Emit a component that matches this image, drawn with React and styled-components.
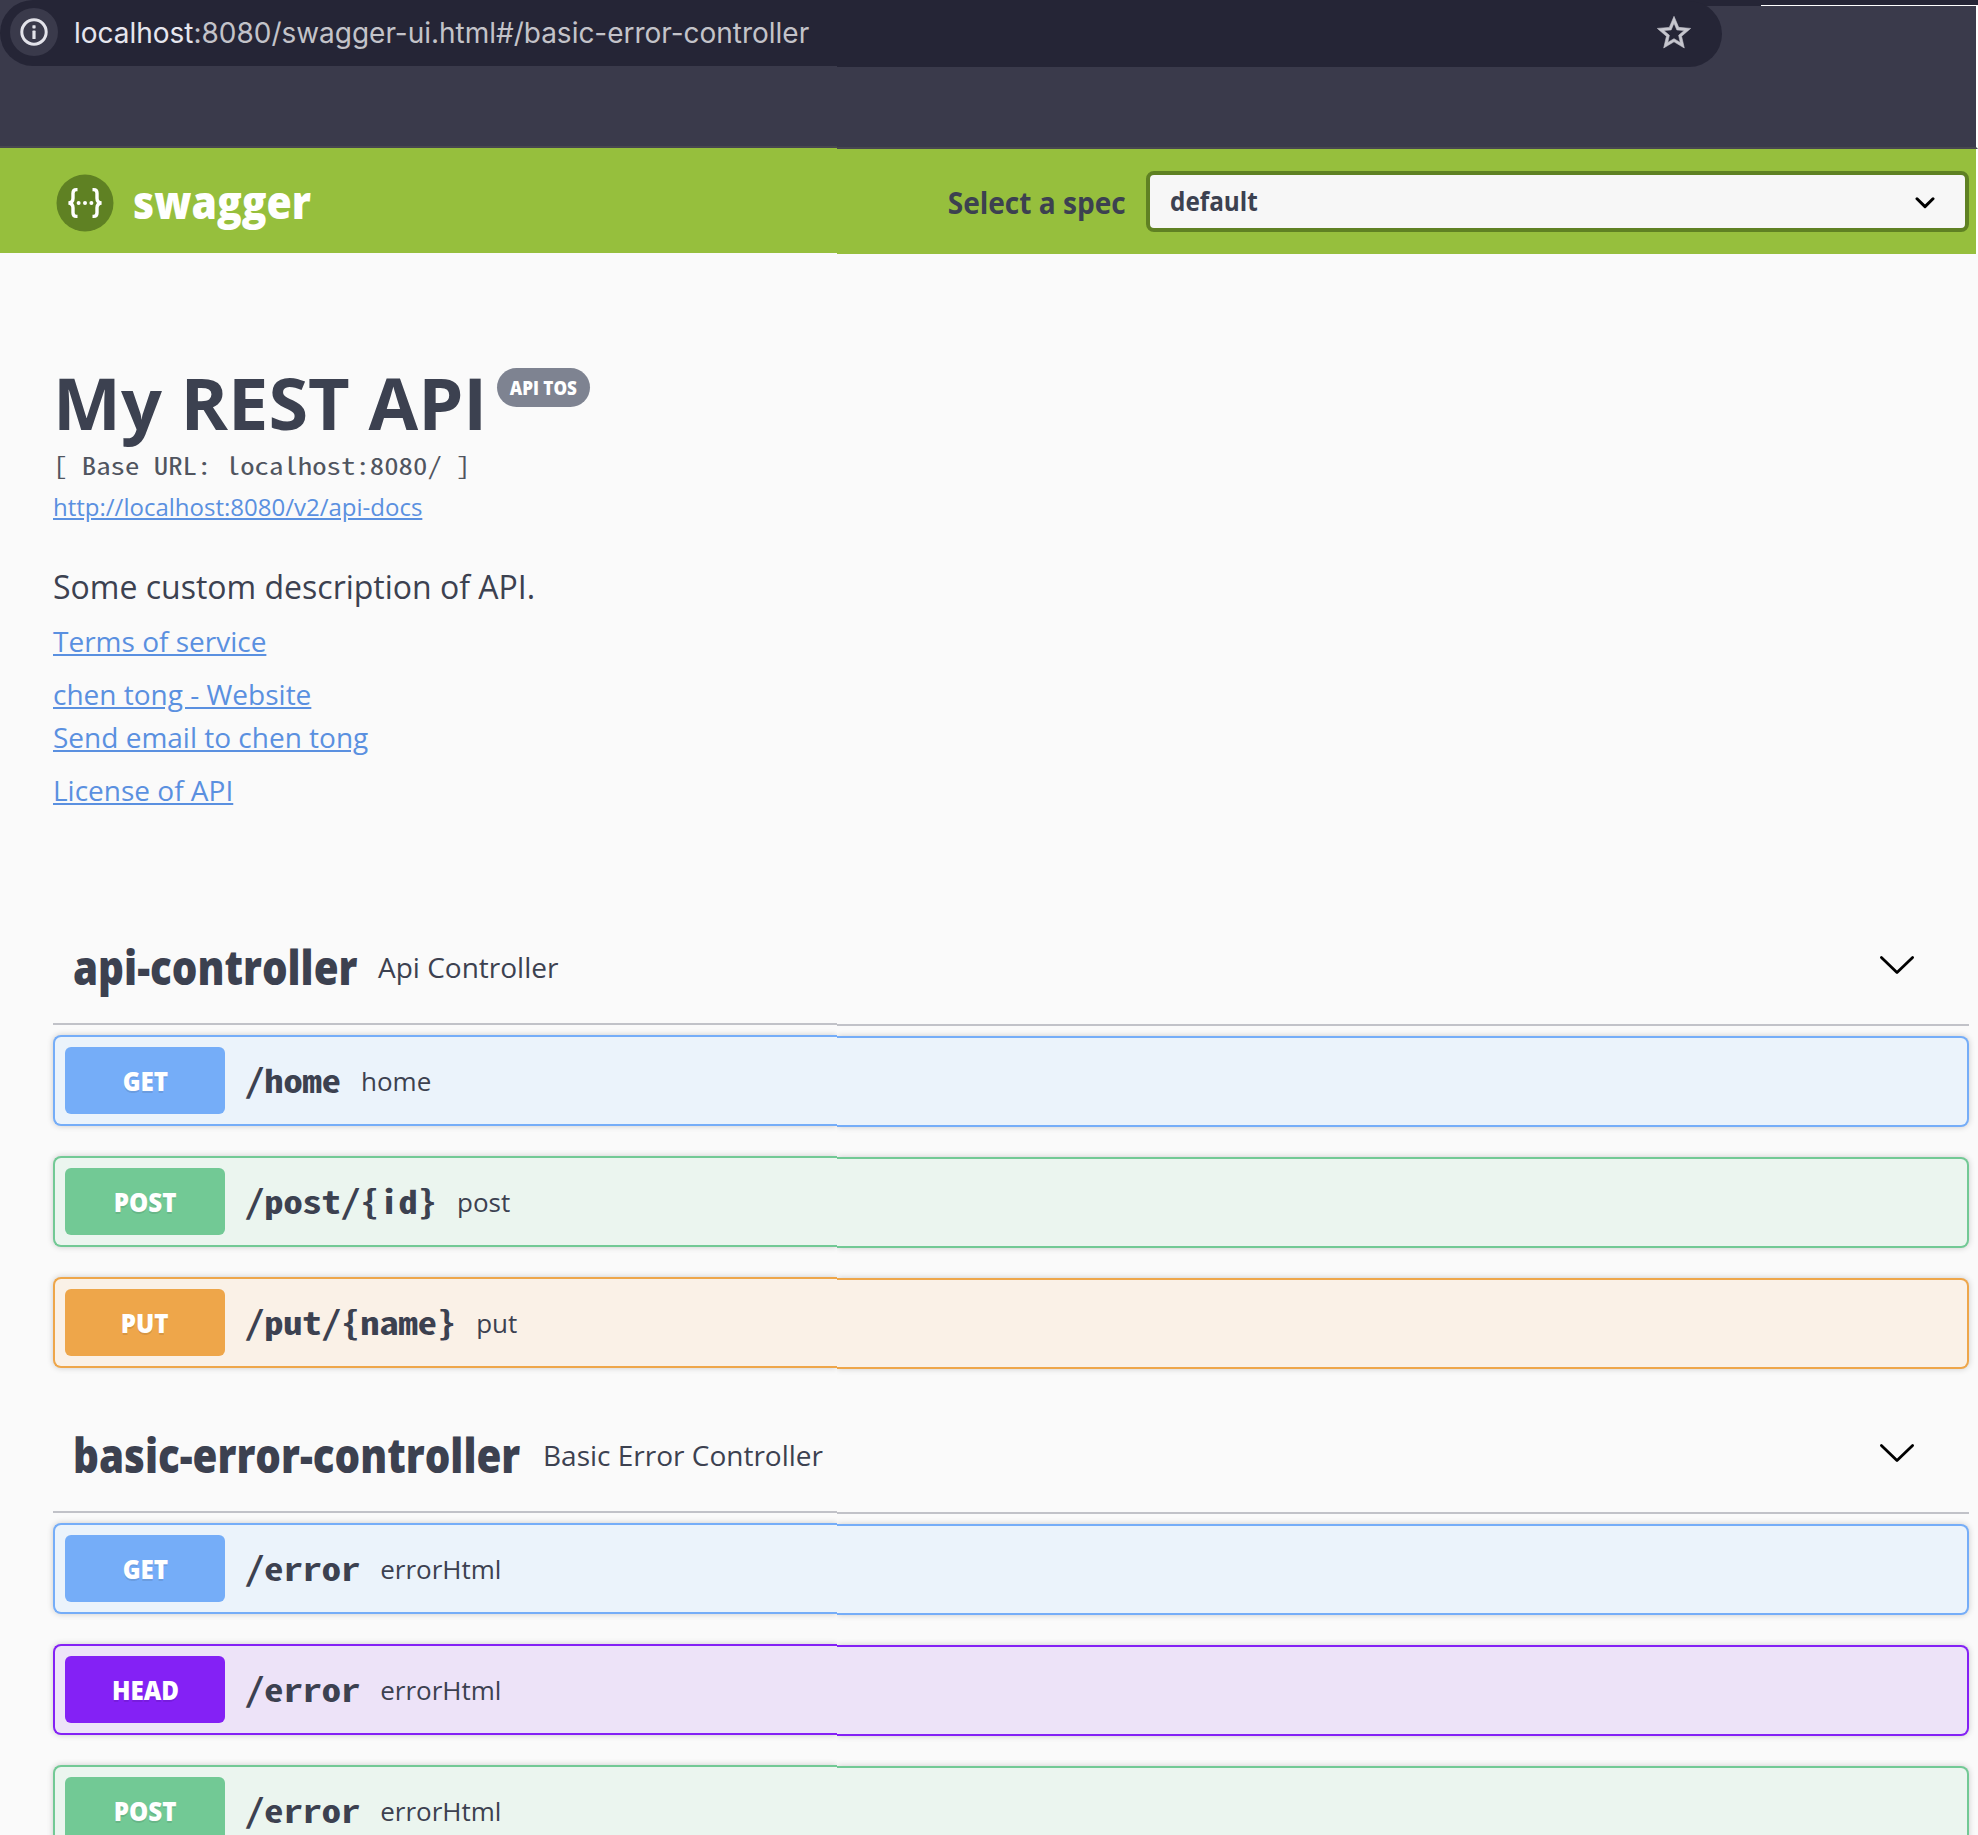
import React from "react";
import styled, { createGlobalStyle } from "styled-components";

const ink = "#3c4150";
const sans = '"Open Sans", "Noto Sans", sans-serif';
const mono = '"Noto Sans Mono CJK SC", "Liberation Mono", monospace';

const METHODS = {
  GET: { main: "#75adf8", tint: "#ebf3fb" },
  POST: { main: "#72c995", tint: "#ebf5ef" },
  PUT: { main: "#eea64a", tint: "#faf1e7" },
  HEAD: { main: "#8421f5", tint: "#ede3f8" },
};

const TAGS = [
  {
    name: "api-controller",
    text: "Api Controller",
    width: 285,
    operations: [
      { method: "GET", path: "/home", summary: "home" },
      { method: "POST", path: "/post/{id}", summary: "post" },
      { method: "PUT", path: "/put/{name}", summary: "put" },
    ],
  },
  {
    name: "basic-error-controller",
    text: "Basic Error Controller",
    width: 450,
    operations: [
      { method: "GET", path: "/error", summary: "errorHtml" },
      { method: "HEAD", path: "/error", summary: "errorHtml" },
      { method: "POST", path: "/error", summary: "errorHtml" },
    ],
  },
];

const GlobalStyle = createGlobalStyle`
  * { box-sizing: border-box; }
  body { margin: 0; background: #fafafa; }
`;

const Page = styled.div`
  width: 1978px;
  height: 1835px;
  overflow: hidden;
  background: #fafafa;
  color: ${ink};
  font-family: ${sans};
`;

const Split = styled.div`
  display: flex;
  align-items: flex-start;
`;

const Scaled = styled.span`
  display: inline-block;
  transform: scaleX(${(p) => p.$scale});
  transform-origin: ${(p) => p.$origin || "center"};
  white-space: nowrap;
`;

const Chrome = styled(Split)`
  height: 149px;
  margin-bottom: -1px;
  background: #3a3a4b;
`;

const ChromeLead = styled.div`
  width: 837px;
  height: 148px;
  border-bottom: 2px solid #47474f;
`;

const ChromeTail = styled.div`
  flex: 1;
  height: 149px;
  border-bottom: 2px solid #47474f;
  border-right: 2px solid #ffffff;
`;

const TopStrip = styled.div`
  display: flex;
  justify-content: flex-end;
  height: 6px;
  margin-right: -2px;
  background: #252536;
`;

const TabEdge = styled.div`
  width: 217px;
  border-bottom: 1px solid #ffffff;
`;

const AddressLead = styled.div`
  display: flex;
  align-items: center;
  height: 66px;
  padding: 0 0 2px 10px;
  border-radius: 33px 0 0 33px;
  background: #252536;
`;

const AddressTail = styled.div`
  display: flex;
  align-items: center;
  justify-content: flex-end;
  width: 885px;
  height: 66px;
  margin-top: -5px;
  padding: 0 28px 2px 0;
  border-radius: 0 33px 33px 0;
  background: #252536;
`;

const Star = styled.svg`
  width: 40px;
  height: 40px;
`;

const InfoButton = styled.div`
  display: flex;
  width: 48px;
  height: 48px;
  border-radius: 50%;
  background: #3a3a4b;
`;

const Address = styled.div`
  margin-left: 16px;
  padding-top: 1px;
  color: #c3c3c9;
  font: 28px/40px Inter, Roboto, sans-serif;
  letter-spacing: -0.02px;
  white-space: nowrap;
`;

const Host = styled.span`
  color: #e6e6ee;
`;

const BarLead = styled.div`
  display: flex;
  align-items: center;
  gap: 19px;
  width: 837px;
  height: 105px;
  padding-left: 56px;
  background: #96bf3d;
`;

const BarTail = styled.div`
  display: flex;
  align-items: center;
  justify-content: flex-end;
  gap: 20px;
  flex: 1;
  height: 105px;
  margin-top: 1px;
  padding-right: 7px;
  border-right: 2px solid #ffffff;
  background: #96bf3d;
`;

const LogoMark = styled.svg`
  width: 58px;
  height: 58px;
  margin-top: 4px;
`;

const LogoText = styled.div`
  color: #ffffff;
  font-size: 46px;
  font-weight: 800;
`;

const SpecLabel = styled.div`
  font-size: 31px;
  font-weight: 700;
`;

const SpecSelect = styled.div`
  display: flex;
  align-items: center;
  justify-content: space-between;
  width: 823px;
  height: 61px;
  padding: 0 30px 2px 20px;
  border: 4px solid #5f8123;
  border-radius: 8px;
  background: #f7f7f7;
  font-size: 27px;
  font-weight: 700;
`;

const Caret = styled.svg`
  width: 20px;
  height: 14px;
  margin-top: 4px;
`;

const Content = styled.main`
  padding: 106px 9px 0 53px;
`;

const Info = styled.section`
  display: flex;
  flex-direction: column;
  align-items: flex-start;
  height: 550px;
`;

const TitleRow = styled.div`
  display: flex;
  align-items: flex-start;
  gap: 10px;
`;

const Title = styled.h1`
  margin: 0;
  font-size: 72px;
  line-height: 84px;
  font-weight: 700;
`;

const Badge = styled.span`
  display: flex;
  align-items: center;
  justify-content: center;
  width: 93px;
  height: 39px;
  margin-top: 8px;
  border-radius: 20px;
  background: #7e8391;
  color: #ffffff;
  font-size: 19px;
  font-weight: 800;
`;

const BaseUrl = styled.pre`
  margin: 6px 0 12px;
  color: #50555f;
  font: 24px/30px ${mono};
`;

const Link = styled.a`
  margin-top: ${(p) => p.$gap}px;
  color: #5a90e0;
  font-size: ${(p) => p.$size}px;
  line-height: ${(p) => p.$line}px;
  text-decoration: underline;
`;

const Description = styled.p`
  margin: 43px 0 -2px;
  font-size: 32px;
  line-height: 44px;
`;

const TagHeader = styled.header`
  display: flex;
  align-items: center;
  height: 113px;
  padding: 0 54px 0 20px;
`;

const TagName = styled.h2`
  width: ${(p) => p.$width}px;
  margin: 0;
  padding-bottom: 1px;
  font-size: 48px;
  font-weight: 800;
  white-space: nowrap;
`;

const TagText = styled.span`
  flex: 1;
  margin-left: 20px;
  padding-top: 1px;
  font-size: 28px;
`;

const TagArrow = styled.svg`
  width: 36px;
  height: 20px;
  margin-bottom: 3px;
`;

const Rule = styled(Split)`
  height: 2px;
  margin-bottom: 10px;
`;

const RuleLead = styled.div`
  width: 784px;
  height: 2px;
  background: #c1c2c8;
`;

const RuleTail = styled.div`
  flex: 1;
  height: 2px;
  margin-top: 1px;
  background: #c1c2c8;
`;

const Operation = styled(Split)`
  height: 91px;
  margin-bottom: 30px;
`;

const OperationLead = styled.div`
  display: flex;
  align-items: center;
  width: 784px;
  height: 91px;
  padding-left: 10px;
  border: 2px solid ${(p) => p.$tone.main};
  border-right: 0;
  border-radius: 8px 0 0 8px;
  background: ${(p) => p.$tone.tint};
  box-shadow: 0 0 6px rgba(0, 0, 0, 0.19);
  clip-path: inset(-10px 0 -10px -10px);
`;

const OperationTail = styled.div`
  flex: 1;
  height: 91px;
  margin-top: 1px;
  border: 2px solid ${(p) => p.$tone.main};
  border-left: 0;
  border-radius: 0 8px 8px 0;
  background: ${(p) => p.$tone.tint};
  box-shadow: 0 0 6px rgba(0, 0, 0, 0.19);
  clip-path: inset(-10px -10px -10px 0);
`;

const Method = styled.div`
  display: flex;
  align-items: center;
  justify-content: center;
  width: 160px;
  height: 67px;
  border-radius: 6px;
  background: ${(p) => p.$tone.main};
  color: #ffffff;
  font-size: 27px;
  font-weight: 800;
  text-shadow: 0 2px 0 rgba(0, 0, 0, 0.1);
`;

const Path = styled.div`
  width: ${(p) => p.$chars * 19.2}px;
  margin: 0 20px;
  padding-bottom: 4px;
  font: 700 32px/40px ${mono};
`;

const Summary = styled.div`
  font-size: 26px;
`;

const TagSection = styled.section`
  display: block;
`;

function Tag({ tag }) {
  return (
    <TagSection>
      <TagHeader>
        <TagName $width={tag.width}>
          <Scaled $scale={0.84} $origin="left">{tag.name}</Scaled>
        </TagName>
        <TagText>{tag.text}</TagText>
        <TagArrow viewBox="0 0 36 20" fill="none" stroke="#000" strokeWidth="2.8" strokeLinecap="round" strokeLinejoin="round">
          <path d="M2.4 2.4 18 17.4 33.6 2.4" />
        </TagArrow>
      </TagHeader>
      <Rule>
        <RuleLead />
        <RuleTail />
      </Rule>
      {tag.operations.map((op) => {
        const tone = METHODS[op.method];
        return (
          <Operation key={op.method}>
            <OperationLead $tone={tone}>
              <Method $tone={tone}>
                <Scaled $scale={0.895}>{op.method}</Scaled>
              </Method>
              <Path $chars={op.path.length}>
                <Scaled $scale={1.2} $origin="left">{op.path}</Scaled>
              </Path>
              <Summary>{op.summary}</Summary>
            </OperationLead>
            <OperationTail $tone={tone} />
          </Operation>
        );
      })}
    </TagSection>
  );
}

export default function App() {
  return (
    <Page>
      <GlobalStyle />
      <Chrome>
        <ChromeLead>
          <AddressLead>
            <InfoButton>
              <svg width="48" height="48" viewBox="0 0 48 48">
                <circle cx="24" cy="24" r="12.2" fill="none" stroke="#e3e3ea" strokeWidth="3" />
                <rect x="22.4" y="17.2" width="3.2" height="3.2" rx="0.6" fill="#e3e3ea" />
                <rect x="22.4" y="22.6" width="3.2" height="8.4" rx="0.6" fill="#e3e3ea" />
              </svg>
            </InfoButton>
            <Address>
              <Host>localhost</Host>:8080/swagger-ui.html#/basic-error-controller
            </Address>
          </AddressLead>
        </ChromeLead>
        <ChromeTail>
          <TopStrip>
            <TabEdge />
          </TopStrip>
          <AddressTail>
            <Star viewBox="0 0 24 24" fill="#c6c6ce" stroke="#c6c6ce" strokeWidth="0.35">
              <path d="m22 9.240-7.190-.620L12 2 9.190 8.630 2 9.240l5.460 4.730L5.820 21 12 17.270 18.180 21l-1.630-7.030L22 9.240zM12 15.400l-3.760 2.270 1-4.280-3.320-2.880 4.380-.380L12 6.100l1.710 4.040 4.380.380-3.320 2.880 1 4.280L12 15.400z" />
            </Star>
          </AddressTail>
        </ChromeTail>
      </Chrome>
      <Split>
        <BarLead>
          <LogoMark viewBox="0 0 58 58" fill="none" stroke="#fff" strokeWidth="3.4">
            <circle cx="29" cy="29" r="28.5" fill="#5f8123" stroke="none" />
            <path d="M21.5 15.6h-1.2c-2.4 0-3.3 1.2-3.3 3.6v5c0 2.8-1.1 4.4-4.4 4.8 3.3.4 4.4 2 4.4 4.8v5c0 2.4.9 3.6 3.3 3.6h1.2" />
            <path d="M36.5 15.6h1.2c2.4 0 3.3 1.2 3.3 3.6v5c0 2.8 1.1 4.4 4.4 4.8-3.3.4-4.4 2-4.4 4.8v5c0 2.4-.9 3.6-3.3 3.6h-1.2" />
            <g fill="#fff" stroke="none">
              <circle cx="22.6" cy="29" r="2" />
              <circle cx="29" cy="29" r="2" />
              <circle cx="35.4" cy="29" r="2" />
            </g>
          </LogoMark>
          <LogoText>
            <Scaled $scale={0.89} $origin="left">swagger</Scaled>
          </LogoText>
        </BarLead>
        <BarTail>
          <SpecLabel>
            <Scaled $scale={0.905} $origin="right">Select a spec</Scaled>
          </SpecLabel>
          <SpecSelect>
            <Scaled $scale={0.9} $origin="left">default</Scaled>
            <Caret viewBox="0 0 20 14" fill="none" stroke="#000" strokeWidth="3" strokeLinecap="round" strokeLinejoin="round">
              <path d="M2 2.8 10 10.6 18 2.8" />
            </Caret>
          </SpecSelect>
        </BarTail>
      </Split>
      <Content>
        <Info>
          <TitleRow>
            <Title>My REST API</Title>
            <Badge>
              <Scaled $scale={0.9}>API TOS</Scaled>
            </Badge>
          </TitleRow>
          <BaseUrl>
            <Scaled $scale={1.2} $origin="left">[ Base URL: localhost:8080/ ]</Scaled>
          </BaseUrl>
          <Link $gap={0} $size={24} $line={30}>http://localhost:8080/v2/api-docs</Link>
          <Description>Some custom description of API.</Description>
          <Link $gap={15} $size={28} $line={38}>Terms of service</Link>
          <Link $gap={15} $size={28} $line={38}>chen tong - Website</Link>
          <Link $gap={5} $size={28} $line={38}>Send email to chen tong</Link>
          <Link $gap={15} $size={28} $line={38}>License of API</Link>
        </Info>
        {TAGS.map((tag) => (
          <Tag key={tag.name} tag={tag} />
        ))}
      </Content>
    </Page>
  );
}
